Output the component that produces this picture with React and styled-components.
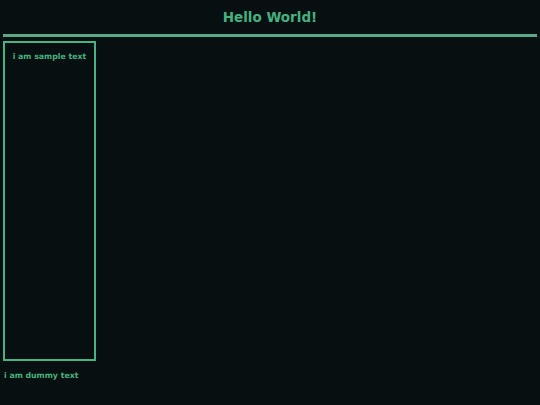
import React from 'react';
import styled, { createGlobalStyle } from 'styled-components';

const GlobalStyle = createGlobalStyle`
	html, body {
		margin: 0;
		padding: 0;
		background: #071010;
		font-family: "DejaVu Sans", sans-serif;
		color: #44b07f;
	}
`;

const Page = styled.div`
	width: 540px;
	height: 405px;
	display: flex;
	flex-direction: column;
`;

const Title = styled.h1`
	margin: 0;
	height: 34px;
	display: flex;
	align-items: center;
	justify-content: center;
	font-size: 13.5px;
	font-weight: bold;
	color: #44b07f;
`;

const Rule = styled.div`
	height: 3px;
	margin: 0 3px;
	background: #5aa887;
`;

const Sidebar = styled.div`
	box-sizing: border-box;
	width: 93px;
	height: 320px;
	margin: 4px 0 0 3px;
	border: 2px solid #48b483;
	padding-top: 9px;
	text-align: center;
	font-size: 7.8px;
	font-weight: bold;
`;

const Footer = styled.p`
	margin: 10px 0 0 4px;
	font-size: 7.8px;
	font-weight: bold;
`;

export default function App() {
	return (
		<Page>
			<GlobalStyle />
			<Title>Hello World!</Title>
			<Rule />
			<Sidebar>i am sample text</Sidebar>
			<Footer>i am dummy text</Footer>
		</Page>
	);
}
